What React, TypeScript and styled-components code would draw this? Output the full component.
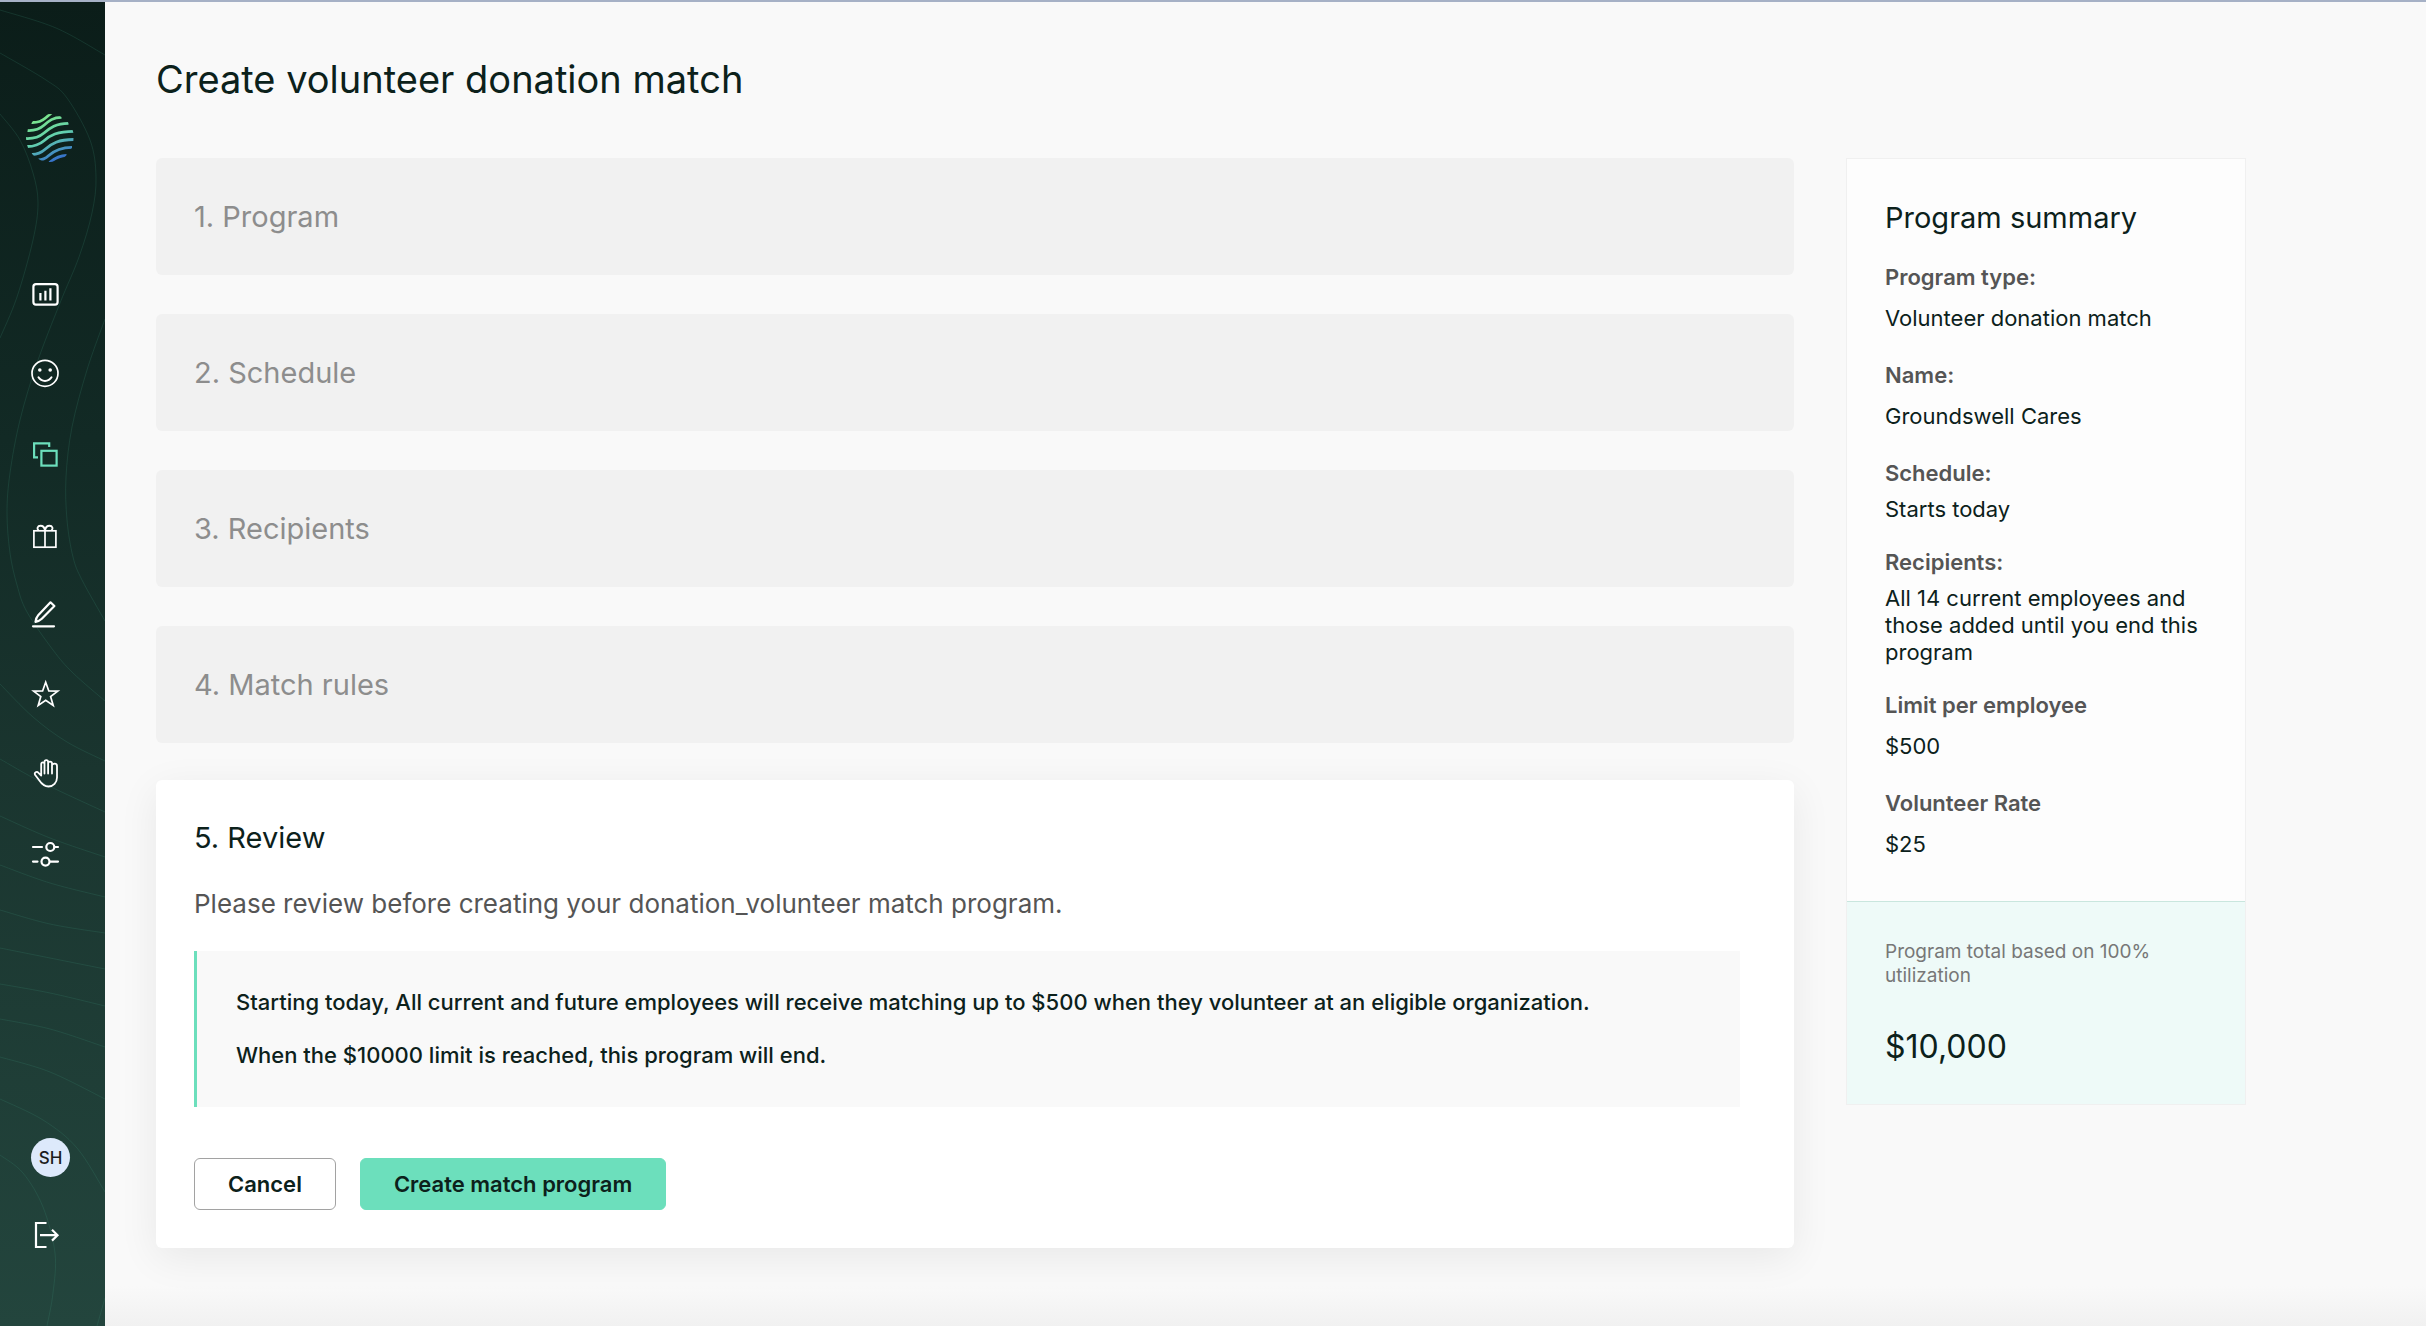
import React from "react";
import styled, { createGlobalStyle, css } from "styled-components";

const GlobalStyle = createGlobalStyle`
  *, *::before, *::after { box-sizing: border-box; }
  body {
    margin: 0;
    background: #f9f9f9;
    color: #0c211b;
    font-family: Inter, "Liberation Sans", sans-serif;
    -webkit-font-smoothing: antialiased;
  }
  h1, h2, h3, p, dl, dd, dt, ul { margin: 0; padding: 0; font-weight: 400; }
  ul { list-style: none; }
`;

const Page = styled.div`
  display: flex;
  min-height: 100vh;
  border-top: 2px solid #a6b1c6;
`;

/* ---------- Sidebar ---------- */

const Sidebar = styled.aside`
  position: relative;
  display: flex;
  flex-direction: column;
  flex: 0 0 105px;
  padding: 112px 0 51px;
  overflow: hidden;
  background: linear-gradient(180deg, #0b1d19 0%, #122a25 33%, #1a352f 58%, #23453d 100%);
`;

const Contours = styled.svg`
  position: absolute;
  top: 0;
  left: 0;
  width: 100%;
  height: 100%;
  fill: none;
  stroke: #3c8f78;
  stroke-opacity: 0.2;
`;

const LogoLink = styled.a`
  position: relative;
  display: block;
  width: 48px;
  height: 48px;
  margin-left: 26px;
`;

const Nav = styled.nav`
  position: relative;
  margin-top: 92px;
`;

const NavLink = styled.a<{ $active?: boolean }>`
  display: flex;
  align-items: center;
  height: 80px;
  padding-left: 29px;
  color: ${(p) => (p.$active ? "#6cdfbc" : "#ffffff")};
`;

const Icon = styled.svg`
  display: block;
  width: 32px;
  height: 32px;
  fill: none;
  stroke: currentColor;
  stroke-width: 2.2;
`;

const Account = styled.div`
  position: relative;
  margin-top: auto;
`;

const Avatar = styled.button`
  display: flex;
  align-items: center;
  justify-content: center;
  width: 39px;
  height: 39px;
  margin: 0 0 18px 31px;
  padding: 0;
  border: 0;
  border-radius: 50%;
  background: #dde9fb;
  color: #1d1d1d;
  font: 500 17px/22px Inter, "Liberation Sans", sans-serif;
`;

/* ---------- Main ---------- */

const Main = styled.main`
  flex: 1;
  min-width: 0;
  padding: 51px 180px 60px 51px;
  background: linear-gradient(to top, #f1f1f1, #f9f9f9) bottom / 100% 40px no-repeat;
`;

const Title = styled.h1`
  font-size: 38px;
  line-height: 52px;
`;

const Columns = styled.div`
  display: flex;
  align-items: flex-start;
  gap: 52px;
  margin-top: 53px;
`;

const Wizard = styled.div`
  flex: 1;
  min-width: 0;
  display: flex;
  flex-direction: column;
  gap: 37px;
`;

const Steps = styled.div`
  display: flex;
  flex-direction: column;
  gap: 39px;
`;

const Heading = styled.h2`
  font-size: 29px;
  line-height: 39px;
`;

const Step = styled.section`
  padding: 39px 38px;
  border-radius: 6px;
  background: #f1f1f1;
  color: #8d8d8d;
`;

const Review = styled.section`
  padding: 38px;
  border-radius: 6px;
  background: #ffffff;
  box-shadow: 0 10px 40px rgba(0, 0, 0, 0.07);
`;

const Intro = styled.p`
  margin: 31px 0;
  color: #555555;
  font-size: 26px;
  line-height: 32px;
`;

const Callout = styled.div`
  display: flex;
  flex-direction: column;
  gap: 26px;
  margin-right: 16px;
  padding: 38px 39px;
  border-left: 3px solid #6cdfbc;
  background: #f9f9f9;
  font-size: 22px;
  line-height: 27px;

  p { font-weight: 500; }
`;

const Actions = styled.div`
  display: flex;
  gap: 24px;
  margin-top: 51px;
`;

const Button = styled.button<{ $primary?: boolean }>`
  height: 52px;
  padding: 0 33px;
  border: 1px solid #a2a2a2;
  border-radius: 6px;
  background: #ffffff;
  color: #0c211b;
  font: 600 22px/27px Inter, "Liberation Sans", sans-serif;
  ${(p) =>
    p.$primary &&
    css`
      border-color: #6cdfbc;
      background: #6cdfbc;
    `}
`;

/* ---------- Summary ---------- */

const Summary = styled.aside`
  flex: 0 0 400px;
  border: 1px solid #f0f0f0;
  background: #fdfdfd;
`;

const SummaryBody = styled.div`
  padding: 39px 38px;
`;

const SummaryList = styled.dl`
  display: flex;
  flex-direction: column;
  gap: 26px;
  margin-top: 27px;
`;

const Item = styled.div`
  display: flex;
  flex-direction: column;
  gap: 9px;
`;

const Label = styled.dt`
  color: #555555;
  font-size: 22px;
  font-weight: 600;
  line-height: 27px;
`;

const Value = styled.dd<{ $tight?: boolean }>`
  font-size: 22px;
  line-height: ${(p) => (p.$tight ? 27 : 36)}px;
`;

const Total = styled.div`
  padding: 38px;
  border-top: 1px solid #c9e6de;
  background: #eefaf8;
`;

const TotalNote = styled.p`
  color: #777777;
  font-size: 19px;
  line-height: 24px;
`;

const TotalAmount = styled.p`
  margin-top: 39px;
  font-size: 32px;
  line-height: 39px;
`;

/* ---------- Data ---------- */

type Point = [number, number];

const contours: Point[][] = [
  [[0, 8], [56, 26], [105, 53]],
  [[0, 51], [46, 78], [67, 96], [90, 138], [96, 175], [92, 211], [79, 255], [60, 301], [37, 361], [20, 418], [10, 471], [7, 511], [10, 551], [17, 583], [27, 610], [53, 648], [73, 671], [105, 699]],
  [[0, 112], [20, 138], [33, 171], [38, 201], [33, 238], [17, 295], [0, 336]],
  [[105, 317], [87, 368], [72, 425], [66, 475], [67, 518], [73, 555], [82, 578], [105, 619]],
  [[0, 682], [33, 715], [67, 740], [105, 759]],
  [[0, 757], [43, 781], [105, 810]],
  [[0, 814], [50, 836], [105, 855]],
  [[0, 863], [50, 881], [105, 895]],
  [[0, 908], [50, 922], [105, 931]],
  [[0, 946], [50, 956], [105, 967]],
  [[0, 982], [50, 991], [105, 1004]],
  [[0, 1017], [50, 1027], [105, 1045]],
  [[0, 1055], [50, 1070], [105, 1097]],
  [[0, 1097], [43, 1118], [77, 1146], [105, 1190]],
  [[0, 1153], [23, 1171], [43, 1205], [55, 1251], [53, 1291], [47, 1324]],
  [[105, 1296], [97, 1324]],
];

/* Catmull-Rom spline through the points, as cubic segments. */
function spline(points: Point[]): string {
  const at = (i: number) => points[Math.max(0, Math.min(points.length - 1, i))];
  let d = `M${points[0][0]} ${points[0][1]}`;
  for (let i = 0; i < points.length - 1; i++) {
    const [a, b, c, e] = [at(i - 1), at(i), at(i + 1), at(i + 2)];
    d += `C${b[0] + (c[0] - a[0]) / 6} ${b[1] + (c[1] - a[1]) / 6} ${c[0] - (e[0] - b[0]) / 6} ${c[1] - (e[1] - b[1]) / 6} ${c[0]} ${c[1]}`;
  }
  return d;
}

const navItems: { label: string; active?: boolean; art: React.ReactNode }[] = [
  {
    label: "Dashboard",
    art: (
      <>
        <rect x="4.400" y="6.200" width="24.200" height="20.400" rx="2.600" />
        <path d="M11.400 15v7.400M16.400 12.700v9.700M21.400 10.300v12.100" />
      </>
    ),
  },
  {
    label: "Employees",
    art: (
      <>
        <circle cx="16" cy="15.300" r="13" strokeWidth="1.700" />
        <circle cx="10.800" cy="12" r="1.800" fill="currentColor" stroke="none" />
        <circle cx="21.200" cy="12" r="1.800" fill="currentColor" stroke="none" />
        <path d="M9.500 19.300c3 4.800 10 4.800 13 0" strokeWidth="2" strokeLinecap="round" />
      </>
    ),
  },
  {
    label: "Match programs",
    active: true,
    art: (
      <>
        <path d="M9 19.300H5.100V5.400H20.200V9" />
        <rect x="12.400" y="12.800" width="15.200" height="14.800" />
      </>
    ),
  },
  {
    label: "Gifts",
    art: (
      <>
        <rect x="4.900" y="12.800" width="22" height="16.400" strokeWidth="1.700" />
        <path d="M16 12.800v16.400" strokeWidth="1.700" />
        <path d="M16 12.500c-.5-3-2-4.700-4.500-4.700-3 0-4 3-2 4.700M16 12.500c.5-3 2-4.700 4.500-4.700 3 0 4 3 2 4.700" strokeWidth="1.900" />
      </>
    ),
  },
  {
    label: "Campaigns",
    art: (
      <>
        <path d="M21.500 4.300l3.900 3.700L12.800 20.800c-1.500 1.500-3.700 2.500-6.300 3 .4-2.700 1.100-4.900 2.700-6.600L21.500 4.300z" strokeLinejoin="round" />
        <path d="M4 28.300h21" strokeLinecap="round" />
      </>
    ),
  },
  {
    label: "Favorites",
    art: <path d="M16.700 4.200l3.100 8.800 9 .1-7.200 5.500 2.600 8.900-7.500-5.300-7.500 5.300 2.600-8.900-7.200-5.500 9-.1z" strokeWidth="1.700" />,
  },
  {
    label: "Volunteering",
    art: (
      <path
        transform="translate(0 -1)"
        d="M12.200 18.500V7.200c0-2.500 3.300-2.500 3.300 0V5c0-2.600 3.600-2.600 3.600 0v1.500c0-2.400 3.900-2.400 3.900 0v2c0-2.300 5-2.600 5 .5v11.500c0 5-3.700 9-8.500 9-4.500 0-7-2.700-9.300-6.200l-4-5.300c-1.400-2.400 1.500-4.200 3.300-2.200l2.700 2.700M15.500 6v10.500M19.100 5v11.500M23 7v9.500"
        strokeWidth="1.800"
        strokeLinecap="round"
        strokeLinejoin="round"
      />
    ),
  },
  {
    label: "Settings",
    art: (
      <>
        <path d="M4 9h9M25.500 9h3.500M4 23.600h4.500M21 23.600h8" strokeLinecap="round" />
        <circle cx="21.300" cy="9" r="4" />
        <circle cx="16.500" cy="23.600" r="4" />
      </>
    ),
  },
];

const steps = ["1. Program", "2. Schedule", "3. Recipients", "4. Match rules"];

const summary: { label: string; value: string; tight?: boolean }[] = [
  { label: "Program type:", value: "Volunteer donation match" },
  { label: "Name:", value: "Groundswell Cares" },
  { label: "Schedule:", value: "Starts today", tight: true },
  { label: "Recipients:", value: "All 14 current employees and those added until you end this program", tight: true },
  { label: "Limit per employee", value: "$500" },
  { label: "Volunteer Rate", value: "$25" },
];

const waves = [
  "M5.500 8.500c6 .2 10-1 14-4.500l6-5",
  "M1.500 16.500c7 .3 12-1.200 16.500-5.200 5-4.500 9-8 17.500-8",
  "M0 24.500c8 .3 13-1.200 18-5.500 6-5.200 12-9.700 24.500-9.700",
  "M0 32.500c8 .3 13-1.500 18-5.800 6-5.200 13-9.400 30-9.400",
  "M5.500 40.500c6 .2 9.500-1.500 14-5.500 6-5.400 13-9.500 28-9.500",
  "M12.500 46c4 0 6.500-1 10-4.200 6-5.400 12-8.400 23.500-8.400",
  "M23.500 48.500c5-4 9.500-7 17-7",
];

export default function App() {
  return (
    <>
      <GlobalStyle />
      <Page>
        <Sidebar>
          <Contours viewBox="0 0 105 1324" preserveAspectRatio="xMinYMin slice" aria-hidden="true">
            {contours.map((points, i) => (
              <path key={i} d={spline(points)} />
            ))}
          </Contours>
          <LogoLink href="#home" aria-label="Home">
            <svg width="48" height="48" viewBox="0 0 48 48" fill="none" aria-hidden="true">
              <defs>
                <linearGradient id="logo" x1="14" y1="0" x2="34" y2="48" gradientUnits="userSpaceOnUse">
                  <stop offset="0" stopColor="#7ee787" />
                  <stop offset="0.5" stopColor="#62cfae" />
                  <stop offset="1" stopColor="#2f63cf" />
                </linearGradient>
                <clipPath id="disc">
                  <circle cx="24" cy="24" r="24" />
                </clipPath>
              </defs>
              <g clipPath="url(#disc)" stroke="url(#logo)" strokeWidth="2.800">
                {waves.map((d) => (
                  <path key={d} d={d} />
                ))}
              </g>
            </svg>
          </LogoLink>
          <Nav aria-label="Main">
            <ul>
              {navItems.map((item) => (
                <li key={item.label}>
                  <NavLink href="#nav" aria-label={item.label} $active={item.active}>
                    <Icon viewBox="0 0 32 32" aria-hidden="true">{item.art}</Icon>
                  </NavLink>
                </li>
              ))}
            </ul>
          </Nav>
          <Account>
            <Avatar type="button">SH</Avatar>
            <NavLink href="#logout" aria-label="Log out">
              <Icon viewBox="0 0 32 32" aria-hidden="true">
                <path d="M17.500 4H7v24h10.500" />
                <path d="M11 16.200h17M23 10.800l5.500 5.400-5.500 5.400" />
              </Icon>
            </NavLink>
          </Account>
        </Sidebar>

        <Main>
          <Title>Create volunteer donation match</Title>
          <Columns>
            <Wizard>
              <Steps>
                {steps.map((name) => (
                  <Step key={name}>
                    <Heading>{name}</Heading>
                  </Step>
                ))}
              </Steps>
              <Review>
                <Heading>5. Review</Heading>
                <Intro>Please review before creating your donation_volunteer match program.</Intro>
                <Callout>
                  <p>
                    Starting today, All current and future employees will receive matching up to $500 when they
                    volunteer at an eligible organization.
                  </p>
                  <p>When the $10000 limit is reached, this program will end.</p>
                </Callout>
                <Actions>
                  <Button type="button">Cancel</Button>
                  <Button type="button" $primary>
                    Create match program
                  </Button>
                </Actions>
              </Review>
            </Wizard>

            <Summary>
              <SummaryBody>
                <Heading>Program summary</Heading>
                <SummaryList>
                  {summary.map((item) => (
                    <Item key={item.label}>
                      <Label>{item.label}</Label>
                      <Value $tight={item.tight}>{item.value}</Value>
                    </Item>
                  ))}
                </SummaryList>
              </SummaryBody>
              <Total>
                <TotalNote>Program total based on 100% utilization</TotalNote>
                <TotalAmount>$10,000</TotalAmount>
              </Total>
            </Summary>
          </Columns>
        </Main>
      </Page>
    </>
  );
}
